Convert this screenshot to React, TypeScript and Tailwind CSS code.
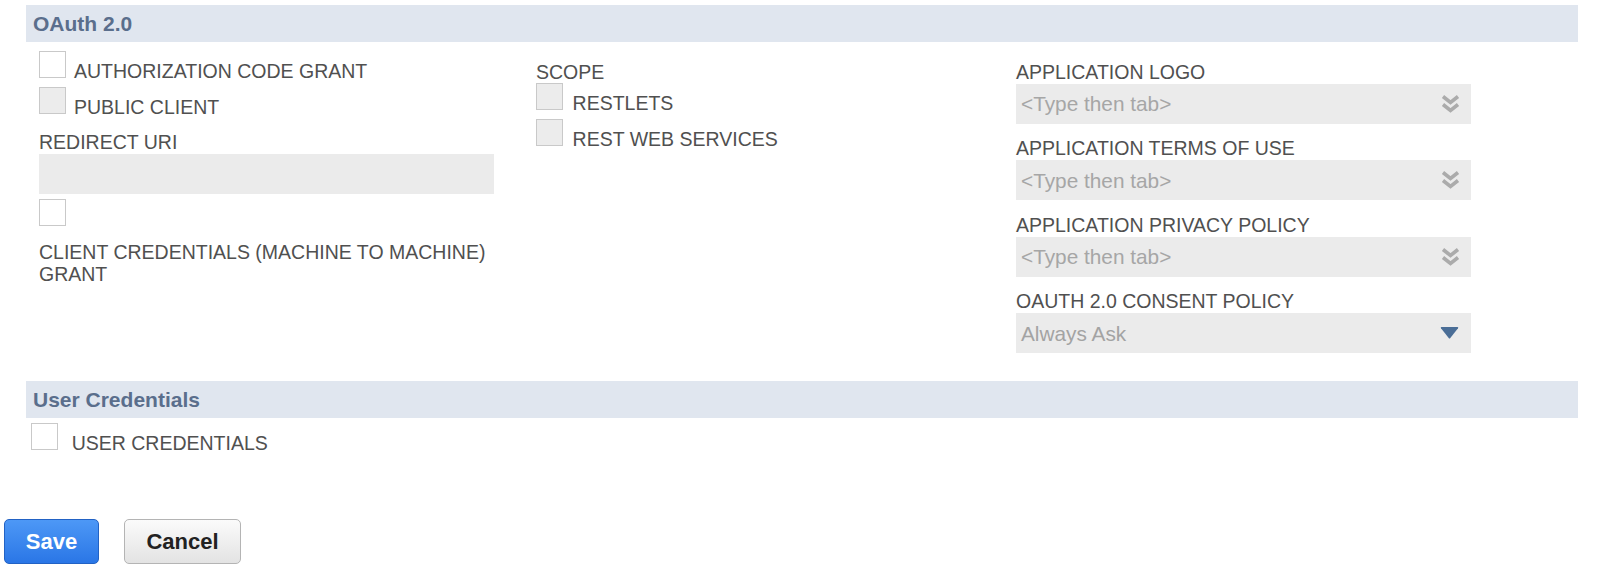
import React from "react";

const font = "font-['Liberation_Sans',Arial,Helvetica,sans-serif]";

function Box({ filled = false }: { filled?: boolean }) {
  return (
    <span
      className={`block w-[27px] h-[27px] shrink-0 border border-[#c9c9c9] ${
        filled ? "bg-[#ececec]" : "bg-white"
      }`}
    />
  );
}

function CheckRow({ label, filled = false, gap = "gap-[8px]" }: { label: string; filled?: boolean; gap?: string }) {
  return (
    <div className={`flex items-baseline ${gap}`}>
      <Box filled={filled} />
      <span className="text-[19.5px] leading-[22px] text-[#505050]">{label}</span>
    </div>
  );
}

function Label({ children }: { children: React.ReactNode }) {
  return <div className="text-[19.5px] leading-[22px] text-[#505050]">{children}</div>;
}

function DoubleChevron() {
  return (
    <svg width="19" height="20" viewBox="0 0 19 20" fill="none" stroke="#ababab" strokeWidth="3.6" strokeLinejoin="miter">
      <polyline points="2,2.5 9.5,8.5 17,2.5" />
      <polyline points="2,10.5 9.5,16.5 17,10.5" />
    </svg>
  );
}

function Caret() {
  return (
    <svg width="19" height="12" viewBox="0 0 19 12">
      <path d="M1 1.2 Q0.2 0 1.6 0 H17.4 Q18.8 0 18 1.2 L10.3 11 Q9.5 12 8.7 11 Z" fill="#4a6d96" />
    </svg>
  );
}

function LookupField({ label }: { label: string }) {
  return (
    <div>
      <Label>{label}</Label>
      <div className="mt-[1px] h-[40px] w-[455px] bg-[#ebebeb] flex items-center justify-between pl-[5px] pr-[11px]">
        <span className="text-[20.8px] text-[#a6a6a6]">&lt;Type then tab&gt;</span>
        <DoubleChevron />
      </div>
    </div>
  );
}

function SectionBar({ title }: { title: string }) {
  return (
    <div className="h-[37px] bg-[#e0e6ef] flex items-center pl-[7px] text-[21px] font-bold text-[#5a6e8c]">
      {title}
    </div>
  );
}

export default function App() {
  return (
    <div className={`${font} w-[1600px] h-[568px] bg-white overflow-hidden`}>
      <div className="pt-[5px] pl-[26px] pr-[22px]">
        <SectionBar title="OAuth 2.0" />

        <div className="flex">
          {/* left column */}
          <div className="ml-[13px] w-[497px] pt-[8.7px]">
            <div className="flex flex-col gap-[5px]">
              <CheckRow label="AUTHORIZATION CODE GRANT" />
              <CheckRow label="PUBLIC CLIENT" filled />
            </div>
            <div className="mt-[13.6px]">
              <Label>REDIRECT URI</Label>
            </div>
            <div className="mt-[1px] h-[40px] w-[455px] bg-[#ebebeb]" />
            <div className="mt-[4.7px]">
              <Box />
            </div>
            <div className="mt-[15px] text-[19.5px] leading-[22.4px] text-[#505050]">
              CLIENT CREDENTIALS (MACHINE TO MACHINE)
              <br />
              GRANT
            </div>
          </div>

          {/* middle column */}
          <div className="w-[480px] pt-[19px]">
            <Label>SCOPE</Label>
            <div className="mt-[0.4px] flex flex-col gap-[5px]">
              <CheckRow label="RESTLETS" filled gap="gap-[9.6px]" />
              <CheckRow label="REST WEB SERVICES" filled gap="gap-[9.6px]" />
            </div>
          </div>

          {/* right column */}
          <div className="pt-[18.5px] flex flex-col gap-[13.6px]">
            <LookupField label="APPLICATION LOGO" />
            <LookupField label="APPLICATION TERMS OF USE" />
            <LookupField label="APPLICATION PRIVACY POLICY" />
            <div>
              <Label>OAUTH 2.0 CONSENT POLICY</Label>
              <div className="mt-[1px] h-[40px] w-[455px] bg-[#ebebeb] flex items-center justify-between pl-[5px] pr-[12px]">
                <span className="text-[20.8px] text-[#a3a3a3]">Always Ask</span>
                <Caret />
              </div>
            </div>
          </div>
        </div>

        <div className="mt-[28px]">
          <SectionBar title="User Credentials" />
        </div>
        <div className="ml-[5px] mt-[4.3px]">
          <CheckRow label="USER CREDENTIALS" gap="gap-[13.7px]" />
        </div>
      </div>

      <div className="mt-[65px] ml-[4px] flex gap-[25px]">
        <button className="h-[45px] w-[95px] rounded-[5px] border border-[#2262c4] bg-gradient-to-b from-[#4d98f6] to-[#2a76e6] text-white text-[22px] font-bold">
          Save
        </button>
        <button className="h-[45px] w-[117px] rounded-[5px] border border-[#b4b4b4] bg-gradient-to-b from-[#fbfbfb] to-[#e3e3e3] text-[#222] text-[22px] font-bold">
          Cancel
        </button>
      </div>
    </div>
  );
}
